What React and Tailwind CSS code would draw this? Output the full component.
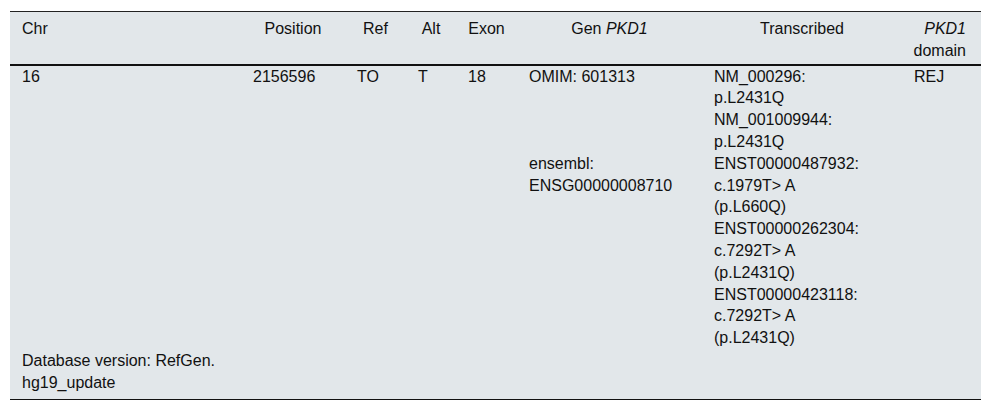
import React from "react";

const cols = "grid-cols-[231px_104px_61px_50px_61px_185px_200px_79px]";

function Lines({ items }) {
  return (
    <div className="flex flex-col">
      {items.map((t, i) => (
        <div key={i}>{t}</div>
      ))}
    </div>
  );
}

export default function App() {
  return (
    <div className="w-[992px] h-[410px] bg-white pt-[11px] pl-[10px]" style={{ fontFamily: '"Liberation Sans", Arial, sans-serif' }}>
      <div className="w-[971px] bg-[#e2e7ea] text-[16px] leading-[21.8px] text-[#111] border-t border-[#222] border-b border-b-[#111]">
        <div className={`grid ${cols} pt-[6px] pb-[2px] border-b-2 border-[#111]`}>
          <div className="px-3">Chr</div>
          <div className="px-3 text-center">Position</div>
          <div className="px-3 text-center">Ref</div>
          <div className="px-3 text-center">Alt</div>
          <div className="px-3 text-center">Exon</div>
          <div className="px-3 text-center">
            Gen <i>PKD1</i>
          </div>
          <div className="px-3 text-center">Transcribed</div>
          <div className="pl-2 pr-[15px] text-right">
            <i>PKD1</i>
            <br />
            domain
          </div>
        </div>
        <div className={`grid ${cols}`}>
          <div className="px-3 row-span-2">16</div>
          <div className="px-3 row-span-2">2156596</div>
          <div className="px-3 row-span-2">TO</div>
          <div className="px-3 row-span-2">T</div>
          <div className="px-3 row-span-2">18</div>
          <div className="px-3">OMIM: 601313</div>
          <div className="px-3">
            <Lines items={["NM_000296:", "p.L2431Q", "NM_001009944:", "p.L2431Q"]} />
          </div>
          <div className="px-3 row-span-2">REJ</div>
          <div className="px-3">
            <Lines items={["ensembl:", "ENSG00000008710"]} />
          </div>
          <div className="px-3">
            <Lines
              items={[
                "ENST00000487932:",
                "c.1979T> A",
                "(p.L660Q)",
                "ENST00000262304:",
                "c.7292T> A",
                "(p.L2431Q)",
                "ENST00000423118:",
                "c.7292T> A",
                "(p.L2431Q)",
              ]}
            />
          </div>
        </div>
        <div className={`grid ${cols} pt-[1px] pb-[5px]`}>
          <div className="px-3">Database version: RefGen. hg19_update</div>
        </div>
      </div>
    </div>
  );
}
